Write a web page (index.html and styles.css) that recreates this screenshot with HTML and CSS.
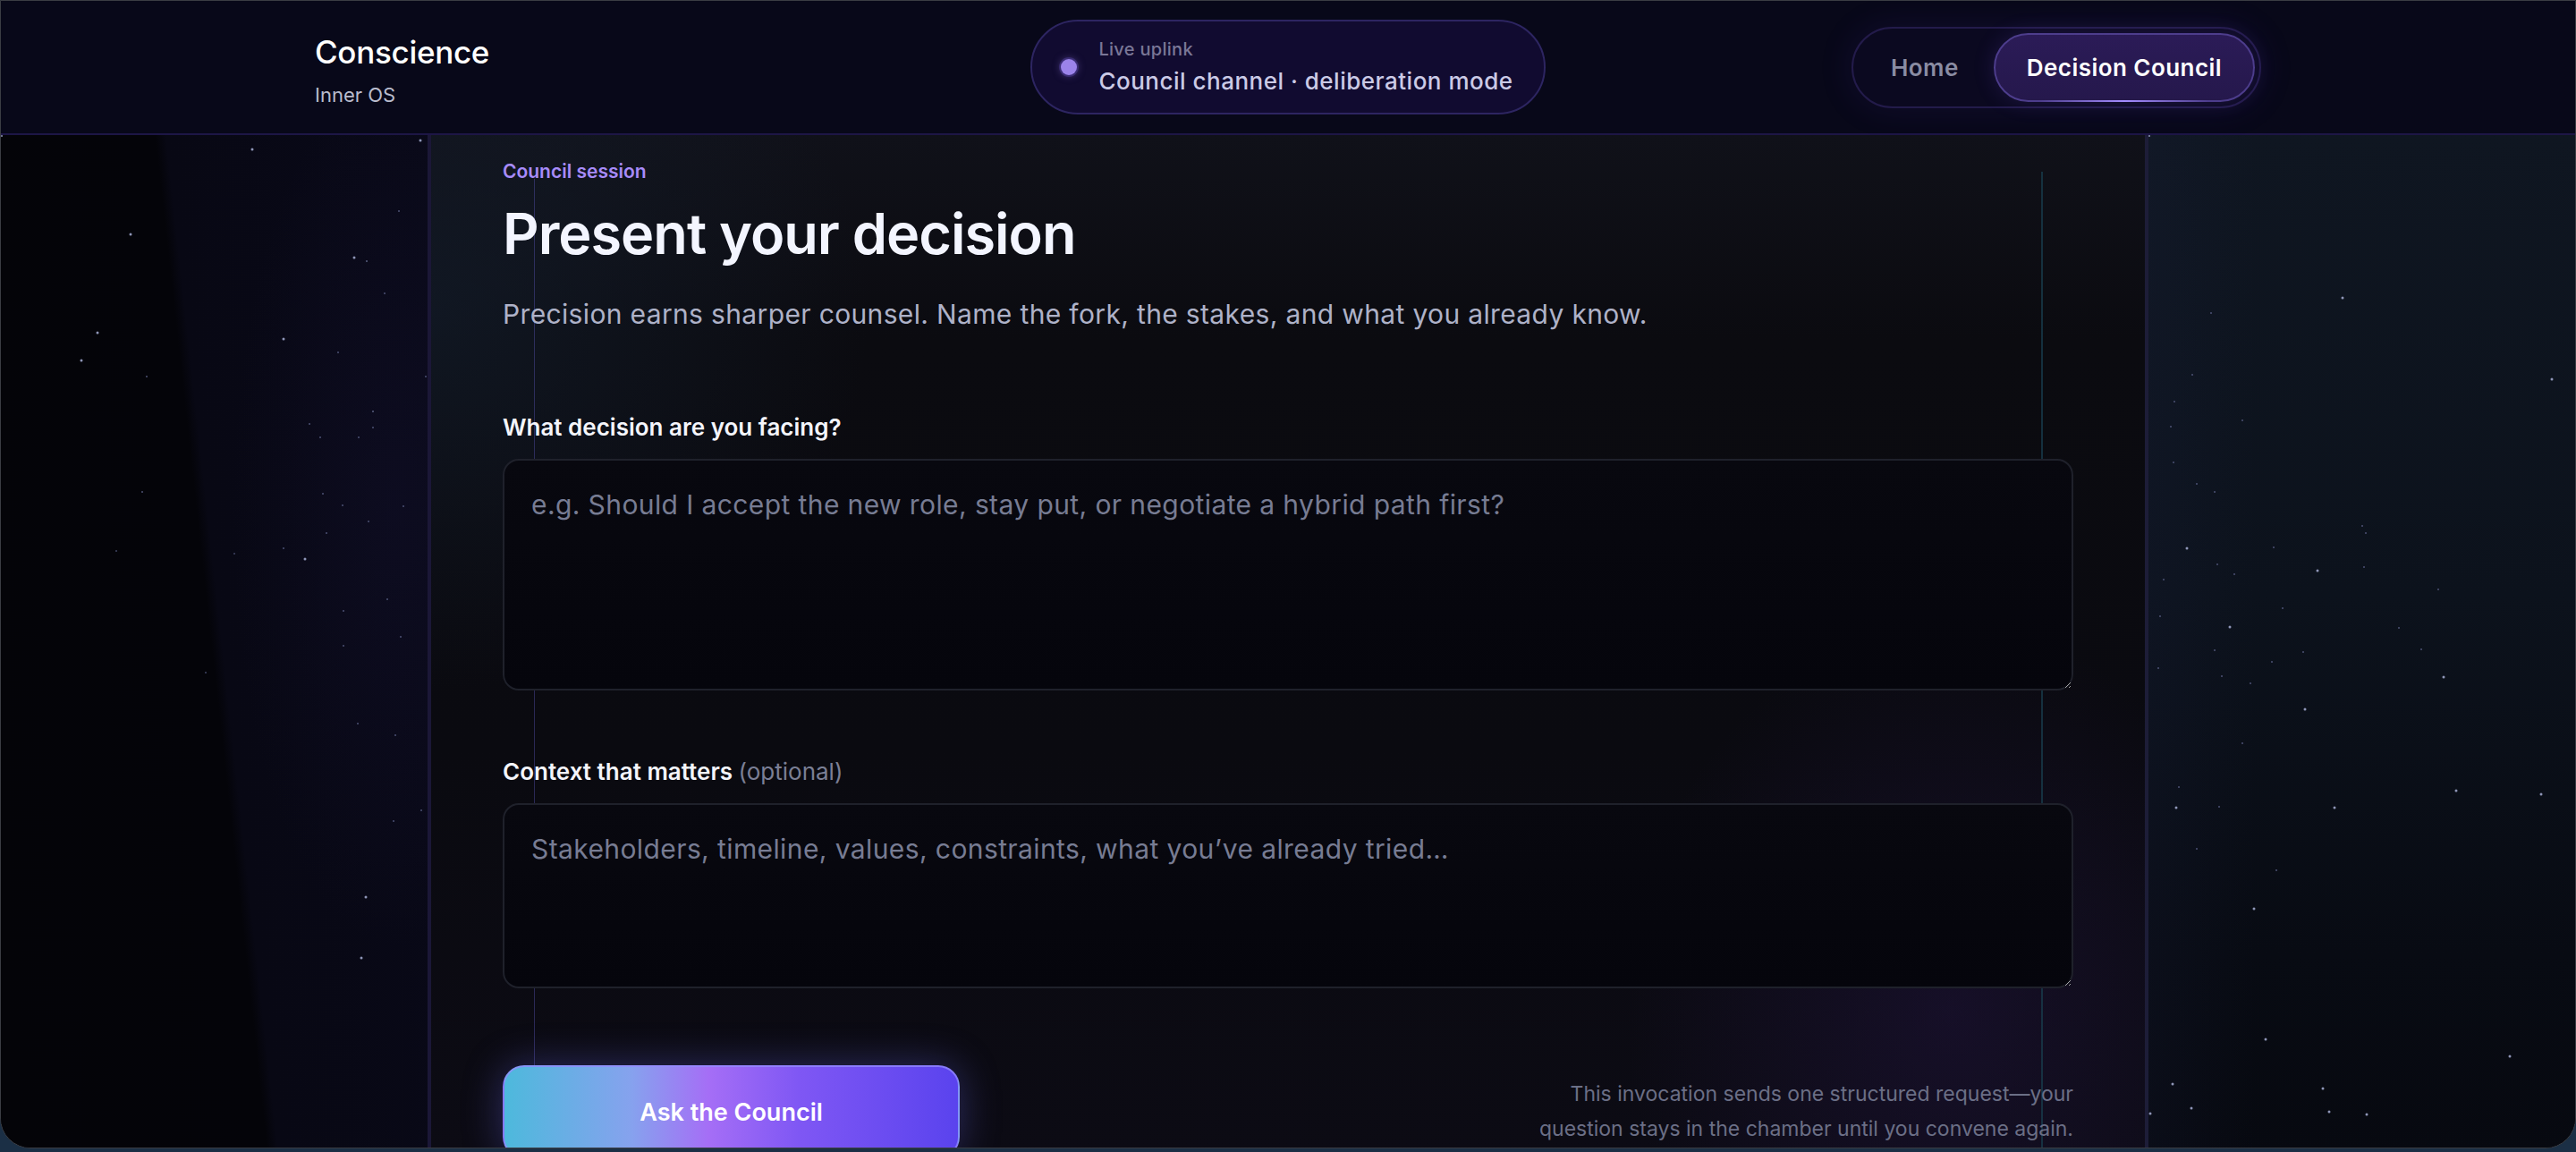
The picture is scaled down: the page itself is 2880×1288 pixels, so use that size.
FILE: index.html
```html
<!DOCTYPE html>
<html lang="en">
<head>
<meta charset="utf-8">
<title>Conscience · Decision Council</title>
<link rel="stylesheet" href="styles.css">
</head>
<body>
<div class="frame">
  <header class="topbar">
    <div class="topbar-inner">
      <div class="brand">
        <div class="brand-name">Conscience</div>
        <div class="brand-sub">Inner OS</div>
      </div>
      <div class="uplink">
        <span class="uplink-dot"></span>
        <div class="uplink-copy">
          <div class="uplink-label">Live uplink</div>
          <div class="uplink-text">Council channel · deliberation mode</div>
        </div>
      </div>
      <nav class="nav">
        <a class="nav-link" href="#">Home</a>
        <a class="nav-link is-active" href="#">Decision Council</a>
      </nav>
    </div>
  </header>

  <main class="stage">
    <aside class="side side-left"></aside>

    <section class="chamber">
      <p class="eyebrow">Council session</p>
      <h1 class="title">Present your decision</h1>
      <p class="lede">Precision earns sharper counsel. Name the fork, the stakes, and what you already know.</p>

      <form class="form">
        <label class="field-label" for="decision">What decision are you facing?</label>
        <textarea id="decision" class="field field-lg" placeholder="e.g. Should I accept the new role, stay put, or negotiate a hybrid path first?"></textarea>

        <label class="field-label field-label-2" for="context">Context that matters <span class="optional">(optional)</span></label>
        <textarea id="context" class="field field-md" placeholder="Stakeholders, timeline, values, constraints, what you’ve already tried…"></textarea>

        <div class="actions">
          <button type="button" class="cta">Ask the Council</button>
          <p class="note">This invocation sends one structured request—your question stays in the chamber until you convene again.</p>
        </div>
      </form>
    </section>

    <aside class="side side-right"></aside>
  </main>
</div>
</body>
</html>
```

FILE: styles.css
```css
* { box-sizing: border-box; }

html, body { margin: 0; }

body {
  background: #1b2f45;
  font-family: Inter, "Noto Sans", "Liberation Sans", sans-serif;
  color: #eef0fa;
}

.frame {
  height: 1284px;
  border: 1px solid #3b3d43;
  border-radius: 0 0 34px 34px;
  overflow: hidden;
  background: #06060c;
  display: flex;
  flex-direction: column;
}

/* ---------- Top bar ---------- */
.topbar {
  flex: none;
  height: 150px;
  background: #080819;
  border-bottom: 2px solid #1d1646;
}

.topbar-inner {
  width: 2176px;
  height: 100%;
  margin: 0 auto;
  display: grid;
  grid-template-columns: 1fr auto 1fr;
  align-items: center;
}

.brand { padding-top: 5px; }

.brand-name {
  font-size: 35px;
  line-height: 44px;
  font-weight: 500;
  color: #ffffff;
  letter-spacing: -0.3px;
}

.brand-sub {
  margin-top: 12px;
  font-size: 22px;
  line-height: 28px;
  color: #b9bccd;
}

.uplink {
  height: 106px;
  display: flex;
  align-items: center;
  gap: 24px;
  padding: 0 34px 0 32px;
  border: 2px solid #2d2561;
  border-radius: 53px;
  background: #110b30;
}

.uplink-dot {
  width: 18px;
  height: 18px;
  border-radius: 50%;
  background: #9b83ea;
  box-shadow: 0 0 0 2px rgba(120, 90, 230, 0.25), 0 0 10px rgba(155, 131, 234, 0.5);
}

.uplink-label {
  font-size: 20px;
  line-height: 26px;
  font-weight: 500;
  letter-spacing: 0.3px;
  color: #7a7797;
}

.uplink-text {
  margin-top: 6px;
  font-size: 26px;
  line-height: 34px;
  font-weight: 500;
  letter-spacing: 0.5px;
  color: #cbcae6;
}

.nav {
  justify-self: end;
  display: flex;
  gap: 2px;
  padding: 5px;
  border: 2px solid #231b4a;
  border-radius: 46px;
  background: #0b0920;
  box-shadow: 0 0 40px rgba(90, 60, 200, 0.12);
}

.nav-link {
  position: relative;
  height: 77px;
  display: flex;
  align-items: center;
  padding: 0 35px;
  border: 2px solid transparent;
  border-radius: 40px;
  font-size: 26px;
  font-weight: 600;
  letter-spacing: 0.45px;
  color: #8a8ca3;
  text-decoration: none;
}

.nav-link.is-active {
  color: #ffffff;
  background: linear-gradient(180deg, #2b1b57 0%, #25184c 100%);
  border-color: #4d3d8c;
  box-shadow: 0 0 24px rgba(110, 80, 220, 0.18);
}

.nav-link.is-active::after {
  content: "";
  position: absolute;
  left: 50px;
  right: 50px;
  bottom: -2px;
  height: 2px;
  border-radius: 2px;
  background: linear-gradient(90deg, rgba(157, 134, 255, 0) 0%, #a48cff 50%, rgba(157, 134, 255, 0) 100%);
}

/* ---------- Stage ---------- */
.stage {
  flex: 1;
  min-height: 0;
  display: grid;
  grid-template-columns: 481px 1fr 481px;
}

.side {
  position: relative;
  overflow: hidden;
}

.side::before {
  content: "";
  position: absolute;
  left: 0;
  top: 0;
  width: 2px;
  height: 2px;
  border-radius: 50%;
}

.side-left {
  border-right: 4px solid #1b1737;
  background:
    radial-gradient(ellipse 260px 700px at 440px 420px, rgba(36, 30, 80, 0.16), rgba(36, 30, 80, 0) 70%),
    linear-gradient(83.7deg, #040408 0%, #040409 49.5%, #080814 51.5%, #090918 100%);
}

.side-left::before {
  background: #8f96b8;
  box-shadow:
    280px 15px 0 0.5px #8f96b8,
    468px 5px 0 0.5px #8f96b8,
    144px 110px 0 0.5px #8f96b8,
    107px 220px 0 0.5px #8f96b8,
    89px 251px 0 0.5px #8f96b8,
    162px 269px 0 0 #4c5274,
    394px 136px 0 0.5px #8f96b8,
    408px 140px 0 0 #5a6082,
    444px 84px 0 0 #4c5274,
    428px 176px 0 0 #4c5274,
    315px 227px 0 0.5px #8f96b8,
    376px 242px 0 0 #4c5274,
    474px 269px 0 0 #4c5274,
    415px 308px 0 0 #5a6082,
    415px 326px 0 0 #4c5274,
    344px 322px 0 0 #4c5274,
    356px 337px 0 0 #4c5274,
    399px 337px 0 0 #4c5274,
    157px 398px 0 0 #4c5274,
    359px 400px 0 0 #4c5274,
    381px 413px 0 0 #4c5274,
    449px 414px 0 0 #4c5274,
    410px 431px 0 0 #4c5274,
    363px 444px 0 0 #4c5274,
    128px 464px 0 0 #3f4463,
    260px 467px 0 0 #3f4463,
    315px 461px 0 0 #4c5274,
    339px 473px 0 0.5px #8f96b8,
    431px 518px 0 0 #4c5274,
    382px 531px 0 0 #4c5274,
    446px 560px 0 0 #4c5274,
    382px 570px 0 0 #4c5274,
    228px 600px 0 0 #3f4463,
    398px 657px 0 0 #4c5274,
    440px 670px 0 0 #4c5274,
    469px 754px 0 0 #4c5274,
    438px 766px 0 0 #4c5274,
    407px 851px 0 0.5px #8f96b8,
    402px 919px 0 0.5px #8f96b8;
}

.side-right {
  border-left: 4px solid #1d1d38;
  background:
    linear-gradient(90deg, rgba(30, 36, 70, 0.15) 0%, rgba(30, 36, 70, 0) 25%),
    linear-gradient(180deg, #0f1621 0%, #0c121c 45%, #080b13 80%, #070910 100%);
}

.side-right::before {
  background: #8f96b8;
  box-shadow:
    216px 181px 0 0.5px #8f96b8,
    69px 198px 0 0 #4c5274,
    450px 272px 0 0.5px #8f96b8,
    48px 267px 0 0 #4c5274,
    28px 297px 0 0 #4c5274,
    24px 325px 0 0 #4c5274,
    104px 318px 0 0 #4c5274,
    27px 365px 0 0 #4c5274,
    53px 389px 0 0 #4c5274,
    73px 398px 0 0 #4c5274,
    238px 436px 0 0 #4c5274,
    242px 444px 0 0 #4c5274,
    42px 461px 0 0.5px #8f96b8,
    139px 460px 0 0 #4c5274,
    76px 479px 0 0 #4c5274,
    188px 486px 0 0.5px #8f96b8,
    95px 490px 0 0 #4c5274,
    240px 482px 0 0 #4c5274,
    16px 496px 0 0 #4c5274,
    323px 507px 0 0 #4c5274,
    149px 528px 0 0 #4c5274,
    12px 537px 0 0 #4c5274,
    90px 549px 0 0.5px #8f96b8,
    279px 550px 0 0 #4c5274,
    73px 575px 0 0 #4c5274,
    172px 577px 0 0 #4c5274,
    304px 574px 0 0 #4c5274,
    10px 595px 0 0 #4c5274,
    137px 588px 0 0 #4c5274,
    81px 604px 0 0 #4c5274,
    113px 612px 0 0 #4c5274,
    329px 605px 0 0.5px #8f96b8,
    174px 641px 0 0.5px #8f96b8,
    104px 679px 0 0 #4c5274,
    33px 728px 0 0 #4c5274,
    343px 732px 0 0.5px #8f96b8,
    438px 736px 0 0.5px #8f96b8,
    30px 751px 0 0.5px #8f96b8,
    78px 750px 0 0 #4c5274,
    207px 751px 0 0.5px #8f96b8,
    53px 797px 0 0 #4c5274,
    142px 821px 0 0 #4c5274,
    117px 864px 0 0.5px #8f96b8,
    130px 1010px 0 0.5px #8f96b8,
    403px 1029px 0 0.5px #8f96b8,
    26px 1060px 0 0.5px #8f96b8,
    194px 1065px 0 0.5px #8f96b8,
    1px 1093px 0 0.5px #8f96b8,
    47px 1087px 0 0.5px #8f96b8,
    201px 1091px 0 0.5px #8f96b8,
    243px 1094px 0 0.5px #8f96b8;
}

/* ---------- Chamber ---------- */
.chamber {
  position: relative;
  padding: 27px 80px 0;
  background:
    radial-gradient(ellipse 520px 620px at 1700px 980px, rgba(60, 32, 115, 0.22), rgba(60, 32, 115, 0) 70%),
    radial-gradient(ellipse 700px 600px at 0px 200px, rgba(24, 40, 60, 0.4), rgba(24, 40, 60, 0) 70%),
    linear-gradient(180deg, #101119 0%, #0b0b10 20%, #0a0a10 60%, #0c0b14 100%);
}

.chamber::before,
.chamber::after {
  content: "";
  position: absolute;
  bottom: 0;
  pointer-events: none;
}

.chamber::before {
  left: 115px;
  top: 49px;
  width: 1px;
  background: rgba(82, 78, 170, 0.45);
}

.chamber::after {
  left: 1800px;
  top: 41px;
  width: 2px;
  background: rgba(24, 62, 78, 0.75);
}

.eyebrow,
.title,
.lede,
.form {
  position: relative;
  z-index: 1;
}

.eyebrow {
  margin: 0;
  font-size: 21px;
  line-height: 28px;
  font-weight: 600;
  color: #a78bfa;
}

.title {
  margin: 19px 0 0;
  font-size: 63px;
  line-height: 72px;
  font-weight: 600;
  letter-spacing: -1px;
  color: #f3f5ff;
}

.lede {
  margin: 32px 0 0;
  font-size: 30px;
  line-height: 44px;
  letter-spacing: 0.35px;
  color: #aeb2c8;
}

.form {
  margin-top: 88px;
  display: flex;
  flex-direction: column;
}

.field-label {
  font-size: 26px;
  line-height: 34px;
  font-weight: 600;
  color: #f4f5fb;
}

.field-label-2 { margin-top: 74px; }

.optional {
  font-weight: 400;
  color: #7b7f95;
}

.field {
  display: block;
  width: 100%;
  margin-top: 18px;
  padding: 27px 30px;
  border: 2px solid #1f212b;
  border-radius: 18px;
  background: linear-gradient(180deg, #08080f 0%, #05050c 100%);
  font-family: inherit;
  font-size: 30px;
  line-height: 44px;
  letter-spacing: 0.4px;
  color: #e6e8f4;
  resize: vertical;
  outline: none;
}

.field::placeholder { color: #777c93; }

.field-lg { height: 259px; }
.field-md { height: 207px; }

.actions {
  margin-top: 86px;
  display: flex;
  align-items: center;
  justify-content: space-between;
}

.cta {
  flex: none;
  width: 511px;
  height: 104px;
  border: 2px solid rgba(150, 140, 255, 0.75);
  border-radius: 24px;
  background: linear-gradient(90deg, #4db9dc 0%, #86a2ee 28%, #a56ef6 45%, #7f57f4 65%, #5a43ee 100%);
  box-shadow: 0 0 44px rgba(110, 110, 240, 0.35);
  font-family: inherit;
  font-size: 27px;
  font-weight: 600;
  color: #ffffff;
  cursor: pointer;
}

.note {
  margin: 0;
  max-width: 620px;
  text-align: right;
  font-size: 23px;
  line-height: 39px;
  color: #6b6f86;
}
```
